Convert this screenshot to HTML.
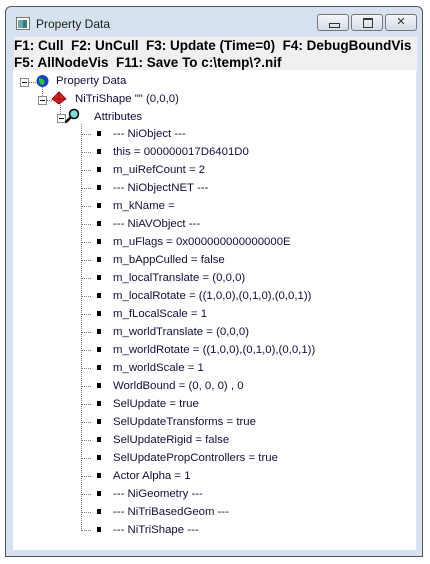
<!DOCTYPE html>
<html><head><style>
body{margin:0;width:430px;height:564px;background:#fff;position:relative;overflow:hidden;font-family:"Liberation Sans",Tahoma,sans-serif}
.win{position:absolute;left:5px;top:6px;width:418px;height:551px;border:1px solid #555;border-radius:6px 6px 0 0;background:#d6e2ef;box-sizing:border-box}
.title{position:absolute;left:30px;top:10px;font-size:12px;color:#1e1e1e}
.btn{position:absolute;top:7px;height:17px;border:1px solid #777;border-radius:3px;background:linear-gradient(#f2f5f9,#d5dde8);box-sizing:border-box}
.tb{position:absolute;left:8px;top:30px;width:403px;height:34px;background:#f0f0f0;font-weight:bold;font-size:13.5px;line-height:17px;padding-left:0;box-sizing:border-box;color:#000;white-space:pre}
.t{position:absolute;font-size:11.4px;color:#10103a;white-space:pre;line-height:14px}
.bx{position:absolute;width:7px;height:7px;border:1px solid #8a8a8a;background:#fff}
.bx:after{content:"";position:absolute;left:1px;top:3px;width:5px;height:1px;background:#000}
.b{position:absolute;width:4px;height:5px;background:#000}
.dv{position:absolute;border-left:1px dotted #777}
.dh{position:absolute;border-top:1px dotted #777;height:0}
</style></head><body>
<div class="win">
<svg style="position:absolute;left:10px;top:10px" width="16" height="14"><rect x="0.5" y="0.5" width="13" height="12" fill="#fff" stroke="#777"/><rect x="2" y="3" width="9" height="8" fill="#3a7a7a"/><rect x="2" y="3" width="5" height="8" fill="#6aa"/></svg>
<div class="title">Property Data</div>
<div class="btn" style="left:311px;width:32px"><div style="position:absolute;left:11px;top:8px;width:9px;height:3px;border:1px solid #333"></div></div>
<div class="btn" style="left:345px;width:32px"><div style="position:absolute;left:11px;top:3px;width:8px;height:7px;border:1px solid #333;border-top-width:2px"></div></div>
<div class="btn" style="left:379px;width:32px;font-size:11px;text-align:center;line-height:15px;color:#333">✕</div>
<div class="tb">F1: Cull  F2: UnCull  F3: Update (Time=0)  F4: DebugBoundVis
F5: AllNodeVis  F11: Save To c:\temp\?.nif</div>
</div>
<div style="position:absolute;left:13px;top:70px;width:403px;height:480px;background:#fff">
</div>
<div class="bx" style="left:20px;top:78px"></div>
<div class="dh" style="left:29px;top:82px;width:7px"></div>
<svg style="position:absolute;left:36px;top:74px" width="13" height="14"><circle cx="6.5" cy="7" r="6" fill="#1a3fd0"/><path d="M3 4l4 1 2 3-2 3-3-1-1-3z" fill="#2c2"/></svg>
<div class="t" style="left:56px;top:74px">Property Data</div>
<div class="dv" style="left:42px;top:87px;height:9px"></div>
<div class="bx" style="left:38px;top:96px"></div>
<div class="dh" style="left:47px;top:100px;width:5px"></div>
<svg style="position:absolute;left:51px;top:91px" width="16" height="14"><path d="M1 8L8 1 15 8 8 13z" fill="#e02020" stroke="#700" stroke-width=".8"/><path d="M8 1V13M1 8h14" stroke="#600" stroke-width=".6"/></svg>
<div class="t" style="left:75px;top:92px">NiTriShape "" (0,0,0)</div>
<div class="dv" style="left:60px;top:105px;height:9px"></div>
<div class="bx" style="left:57px;top:114px"></div>
<svg style="position:absolute;left:64px;top:108px" width="16" height="16"><circle cx="10" cy="6" r="4.5" fill="#7dd" stroke="#000" stroke-width="1.5"/><path d="M7 9L1.5 14.5" stroke="#000" stroke-width="2.5"/></svg>
<div class="t" style="left:94px;top:110px">Attributes</div>
<div class="dv" style="left:81px;top:124px;height:407px"></div>
<div id="items"></div>
<script>
var L=["--- NiObject ---","this = 000000017D6401D0","m_uiRefCount = 2","--- NiObjectNET ---","m_kName =","--- NiAVObject ---","m_uFlags = 0x000000000000000E","m_bAppCulled = false","m_localTranslate = (0,0,0)","m_localRotate = ((1,0,0),(0,1,0),(0,0,1))","m_fLocalScale = 1","m_worldTranslate = (0,0,0)","m_worldRotate = ((1,0,0),(0,1,0),(0,0,1))","m_worldScale = 1","WorldBound = (0, 0, 0) , 0","SelUpdate = true","SelUpdateTransforms = true","SelUpdateRigid = false","SelUpdatePropControllers = true","Actor Alpha = 1","--- NiGeometry ---","--- NiTriBasedGeom ---","--- NiTriShape ---"];
var h="";L.forEach(function(s,i){var y=134+i*18;h+='<div class="dh" style="left:82px;top:'+y+'px;width:9px"></div><div class="b" style="left:97px;top:'+(y-3)+'px"></div><div class="t" style="left:113px;top:'+(y-7)+'px">'+s+'</div>';});
document.getElementById("items").innerHTML=h;
</script>
</body></html>
